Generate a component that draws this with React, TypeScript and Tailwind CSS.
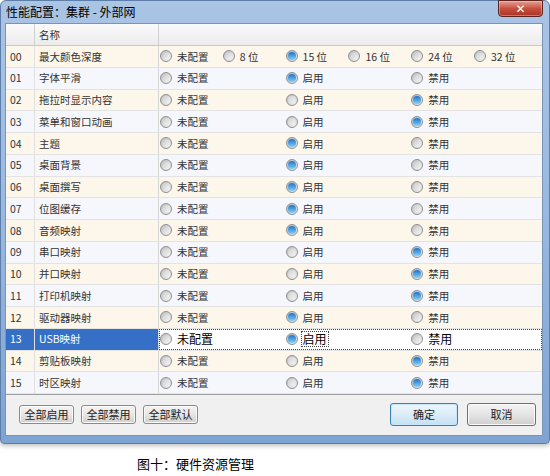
const FONT = { fontFamily: '"Noto Sans CJK SC", "Noto Sans", sans-serif' };

type Row = { id: string; name: string; pick: number };

// pick: grid column index (0..5) of the checked option
const rows: Row[] = [
  { id: "00", name: "最大颜色深度", pick: 2 },
  { id: "01", name: "字体平滑", pick: 2 },
  { id: "02", name: "拖拉时显示内容", pick: 4 },
  { id: "03", name: "菜单和窗口动画", pick: 4 },
  { id: "04", name: "主题", pick: 2 },
  { id: "05", name: "桌面背景", pick: 2 },
  { id: "06", name: "桌面撰写", pick: 2 },
  { id: "07", name: "位图缓存", pick: 2 },
  { id: "08", name: "音频映射", pick: 2 },
  { id: "09", name: "串口映射", pick: 4 },
  { id: "10", name: "并口映射", pick: 4 },
  { id: "11", name: "打印机映射", pick: 4 },
  { id: "12", name: "驱动器映射", pick: 2 },
  { id: "13", name: "USB映射", pick: 2 },
  { id: "14", name: "剪贴板映射", pick: 4 },
  { id: "15", name: "时区映射", pick: 4 },
];

const depthOptions = ["未配置", "8 位", "15 位", "16 位", "24 位", "32 位"];
const toggleOptions = ["未配置", "", "启用", "", "禁用", ""];

function Radio({ checked }: { checked: boolean }) {
  return (
    <span className="w-[12px] h-[12px] shrink-0 rounded-full border border-[#8e8f8f] bg-gradient-to-br from-[#bdbdbd] to-[#f6f6f6] flex items-center justify-center">
      {checked ? (
        <span className="w-[8px] h-[8px] rounded-full bg-gradient-to-b from-[#1f72c9] to-[#7fd0f8] shadow-[0_0_1px_#5aa4e0]" />
      ) : (
        <span className="w-[7px] h-[7px] rounded-full bg-gradient-to-br from-[#cfcfcf] to-[#f4f4f4]" />
      )}
    </span>
  );
}

function TableRow({ row, index }: { row: Row; index: number }) {
  const selected = row.id === "13";
  const labels = row.id === "00" ? depthOptions : toggleOptions;
  const stripe = index % 2 === 0 ? "bg-[#fdf6ea]" : "bg-[#f6f7fc]";

  return (
    <div className={`flex h-[21.75px] border-b border-[#e3e3e3] ${selected ? "bg-white" : stripe}`}>
      <div
        className={`w-[29px] pl-[4px] flex items-center border-r border-[#e0e0e0] ${
          selected ? "bg-[#3670c6] text-white" : "text-[#333]"
        }`}
      >
        {row.id}
      </div>
      <div
        className={`w-[124px] pl-[4px] flex items-center border-r border-[#d8d8d8] ${
          selected ? "bg-[#3670c6] text-white" : "text-[#333]"
        }`}
      >
        {row.name}
      </div>
      <div
        className={`flex-1 grid grid-cols-[repeat(6,62.8px)] items-center pl-[1px] ${
          selected ? "outline-1 outline-dotted outline-[#444] -outline-offset-1 text-black text-[12px]" : "text-[#333]"
        }`}
      >
        {labels.map((label, i) =>
          label ? (
            <div key={i} className="flex items-center gap-[5px]">
              <Radio checked={row.pick === i} />
              <span
                className={
                  selected && row.pick === i
                    ? "outline-1 outline-dotted outline-[#444] leading-[14px] px-[1px] -ml-[1px]"
                    : ""
                }
              >
                {label}
              </span>
            </div>
          ) : (
            <div key={i} />
          )
        )}
      </div>
    </div>
  );
}

function SmallButton({ children }: { children: React.ReactNode }) {
  return (
    <button className="w-[55px] h-[19px] rounded-[3px] border border-[#8a8a8a] bg-gradient-to-b from-[#f4f4f4] via-[#e6e6e6] to-[#cfcfcf] text-[11px] text-[#222] leading-none shadow-[inset_0_0_0_1px_#fbfbfb]">
      {children}
    </button>
  );
}

export default function App() {
  return (
    <div className="w-[550px] h-[476px] bg-white overflow-hidden text-[10.5px]" style={FONT}>
      {/* Window */}
      <div className="w-[550px] h-[444px] rounded-t-[6px] rounded-b-[4px] bg-gradient-to-b from-[#aac4e4] via-[#9ab8df] to-[#7fa3d2] border border-[#5d7ea8] flex flex-col shadow-[0_2px_4px_rgba(0,0,0,0.25)]">
        {/* Title bar */}
        <div className="h-[22px] flex items-start justify-between pl-[5px] shrink-0">
          <span className="text-[12px] text-black leading-[22px]">性能配置：集群 - 外部网</span>
          <div className="mr-[6px] -mt-[1px] w-[45px] h-[17px] rounded-b-[4px] border border-[#5b2420] bg-gradient-to-b from-[#e3a093] via-[#c85040] to-[#a93222] flex items-center justify-center shadow-[inset_0_0_0_1px_rgba(255,220,210,0.4)]">
            <span className="text-white text-[12px] font-bold leading-none" style={{ fontFamily: '"DejaVu Sans", sans-serif' }}>
              ✕
            </span>
          </div>
        </div>

        {/* Client area */}
        <div className="ml-[4px] mr-[6px] flex flex-col bg-[#f0f0f0] border border-[#7b93b5]">
          <div className="bg-white border-b border-[#a0a0a0]">
            {/* Header */}
            <div className="flex h-[22px] border-b border-[#c8c8c8] bg-gradient-to-b from-[#fafafa] to-[#ececec] text-[#333]">
              <div className="w-[29px] border-r border-[#d0d0d0]" />
              <div className="w-[124px] pl-[4px] flex items-center border-r border-[#d0d0d0]">名称</div>
              <div className="flex-1" />
            </div>
            {rows.map((row, i) => (
              <TableRow key={row.id} row={row} index={i} />
            ))}
          </div>

          {/* Buttons */}
          <div className="h-[40px] flex items-center justify-between pl-[13px] pr-[6px]">
            <div className="flex gap-[7px] mt-[-2px]">
              <SmallButton>全部启用</SmallButton>
              <SmallButton>全部禁用</SmallButton>
              <SmallButton>全部默认</SmallButton>
            </div>
            <div className="flex gap-[9px] mt-[-2px]">
              <button className="w-[68px] h-[23px] rounded-[3px] border border-[#3c7fb1] bg-gradient-to-b from-[#eef6fc] via-[#dcecf8] to-[#c4e0f4] text-[11px] text-[#222] shadow-[inset_0_0_0_1px_#c6e6fb]">
                确定
              </button>
              <button className="w-[69px] h-[23px] rounded-[3px] border border-[#707070] bg-gradient-to-b from-[#f4f4f4] via-[#e5e5e5] to-[#cfcfcf] text-[11px] text-[#222] shadow-[inset_0_0_0_1px_#fafafa]">
                取消
              </button>
            </div>
          </div>
        </div>
      </div>

      {/* Caption */}
      <div className="pl-[137px] pt-[13px] text-[13px] text-black leading-none">图十：硬件资源管理</div>
    </div>
  );
}
